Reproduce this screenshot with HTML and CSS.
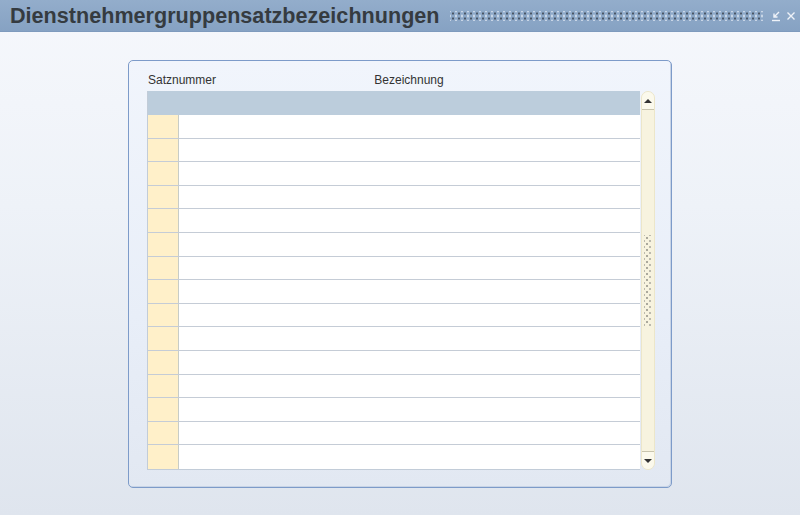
FILE: index.html
```html
<!DOCTYPE html>
<html lang="de">
<head>
    <meta charset="UTF-8">
    <title>Dienstnehmergruppensatzbezeichnungen</title>
    <link rel="stylesheet" href="styles.css">
</head>
<body>

    <div class="titlebar">
        <h1 class="title">Dienstnehmergruppensatzbezeichnungen</h1>
        <div class="grip"></div>
        <div class="win-buttons">
            <svg class="win-icon" width="12" height="12" viewBox="0 0 12 12">
                <path d="M9 2 L4 7 M4 3.5 L4 7 L7.5 7" stroke="#eef2f8" stroke-width="1.4" fill="none"/>
                <path d="M2 10.5 H10" stroke="#eef2f8" stroke-width="1.4"/>
            </svg>
            <svg class="win-icon" width="12" height="12" viewBox="0 0 12 12">
                <path d="M2.5 2.5 L9.5 9.5 M9.5 2.5 L2.5 9.5" stroke="#eef2f8" stroke-width="1.4"/>
            </svg>
        </div>
    </div>

    <div class="content">
        <div class="panel">
            <div class="labels">
                <div class="label-nr">Satznummer</div>
                <div class="label-bez">Bezeichnung</div>
            </div>
            <div class="table-wrap">
                <div class="table" id="table">
                    <div class="row head"><div class="cell nr"></div><div class="cell bez"></div></div>
                </div>
                <div class="scrollbar">
                    <div class="scroll-btn up">
                        <svg width="8" height="6" viewBox="0 0 8 6"><path d="M0 5 L4 1 L8 5 Z" fill="#333"/></svg>
                    </div>
                    <div class="scroll-track">
                        <div class="scroll-grip"></div>
                    </div>
                    <div class="scroll-btn down">
                        <svg width="8" height="6" viewBox="0 0 8 6"><path d="M0 1 L4 5 L8 1 Z" fill="#333"/></svg>
                    </div>
                </div>
            </div>
        </div>
    </div>

    <script>
        const table = document.getElementById("table");
        for (let i = 0; i < 15; i++) {
            let row = document.createElement("div");
            row.classList.add("row");
            row.innerHTML = '<div class="cell nr"></div><div class="cell bez"></div>';
            table.appendChild(row);
        }
    </script>

</body>
</html>
```

FILE: styles.css
```css
* {
    margin: 0;
    padding: 0;
    box-sizing: border-box;
}

body, html {
    width: 100%;
    height: 100%;
    font-family: 'Liberation Sans', Arial, sans-serif;
    overflow: hidden;
}

body {
    display: flex;
    flex-direction: column;
    background: linear-gradient(180deg, #f6f8fc 0%, #eef2f8 40%, #dfe5ee 100%);
}

.titlebar {
    height: 32px;
    display: flex;
    align-items: center;
    background: linear-gradient(180deg, #93adcb, #86a2c3);
    border-bottom: 1px solid #7f9bbd;
    padding-left: 10px;
}

.title {
    font-size: 21.6px;
    font-weight: bold;
    color: #353b40;
    white-space: nowrap;
}

.grip {
    flex: 1;
    height: 10px;
    margin: 0 6px 0 10px;
    background-image:
        radial-gradient(circle, #4a5666 0.9px, transparent 1.3px),
        radial-gradient(circle, #dfe7f2 0.9px, transparent 1.3px);
    background-size: 6px 5px, 6px 5px;
    background-position: 0 0, 3px 2.5px;
}

.win-buttons {
    display: flex;
    gap: 3px;
    padding-right: 3px;
}

.win-icon {
    display: block;
}

.content {
    flex: 1;
    display: flex;
    justify-content: center;
    padding-top: 28px;
}

.panel {
    width: 544px;
    height: 428px;
    border: 1px solid #7d9bc9;
    border-radius: 5px;
    background: linear-gradient(180deg, #f1f5fc 0%, #e8eef8 60%, #e2e8f2 100%);
    box-shadow: inset -1px -1px 0 #c8d4e6;
    padding: 7px 16px 0 18px;
}

.labels {
    height: 23px;
    display: flex;
    align-items: center;
    font-size: 12px;
    color: #333;
}

.label-nr {
    width: 31px;
    white-space: nowrap;
    padding-left: 1px;
}

.label-bez {
    width: 462px;
    text-align: center;
}

.table-wrap {
    display: flex;
    gap: 1px;
}

.table {
    width: 493px;
    border-left: 1px solid #c2ccd8;
    border-bottom: 1px solid #c2ccd8;
}

.row {
    display: flex;
    height: 23.6px;
    border-bottom: 1px solid #c5ccd6;
}

.row:last-child {
    border-bottom: none;
}

.row.head {
    height: 24px;
    background: #bccddc;
    border-bottom: none;
}

.cell.nr {
    width: 31px;
    background: #fff0c9;
    border-right: 1px solid #c8ccc6;
}

.cell.bez {
    flex: 1;
    background: #fff;
}

.row.head .cell {
    background: transparent;
    border: none;
}

.scrollbar {
    width: 14px;
    height: 379px;
    display: flex;
    flex-direction: column;
    background: #f7f3df;
    border-radius: 7px;
    border: 1px solid #ece6c9;
}

.scroll-btn {
    height: 18px;
    display: flex;
    justify-content: center;
    align-items: center;
}

.scroll-btn.up {
    border-bottom: 1px solid #c8c4ae;
    border-radius: 7px 7px 0 0;
    background: #fbf9ec;
}

.scroll-btn.down {
    border-top: 1px solid #c8c4ae;
    border-radius: 0 0 7px 7px;
    background: #fbf9ec;
}

.scroll-track {
    flex: 1;
    display: flex;
    justify-content: center;
    align-items: center;
}

.scroll-grip {
    width: 8px;
    height: 92px;
    background-image:
        radial-gradient(circle, #aaa89c 0.8px, transparent 1.2px),
        radial-gradient(circle, #bcbaae 0.8px, transparent 1.2px);
    background-size: 6px 6px, 6px 6px;
    background-position: 0 0, 3px 3px;
}
```
